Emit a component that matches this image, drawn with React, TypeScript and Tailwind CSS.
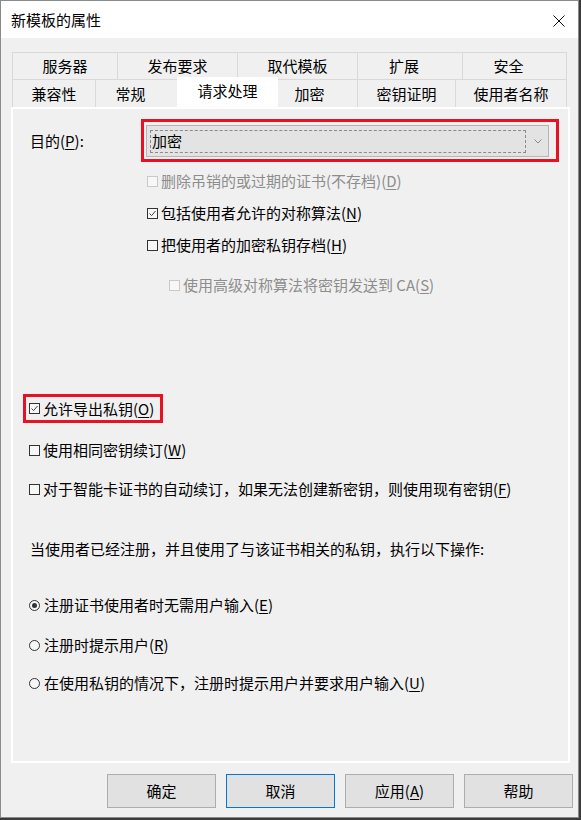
import React from "react";

const font = "font-['Noto_Sans_CJK_SC','Noto_Sans',sans-serif]";

function Key({ k }: { k: string }) {
  return <u className="underline-offset-2 decoration-1">{k}</u>;
}

function Check({ on, disabled }: { on?: boolean; disabled?: boolean }) {
  return (
    <span
      className={`flex h-[11px] w-[11px] shrink-0 items-center justify-center border bg-[#f7f7f7] ${
        disabled ? "border-[#c9c9c9]" : "border-[#333333]"
      }`}
    >
      {on && (
        <svg width="9" height="9" viewBox="0 0 9 9">
          <path d="M1.5 4.5 L3.6 6.6 L7.5 2" fill="none" stroke="#444" strokeWidth="1" />
        </svg>
      )}
    </span>
  );
}

function Radio({ on }: { on?: boolean }) {
  return (
    <span className="flex h-[11px] w-[11px] shrink-0 items-center justify-center rounded-full border border-[#333333] bg-[#f7f7f7]">
      {on && <span className="h-[5px] w-[5px] rounded-full bg-[#333333]" />}
    </span>
  );
}

function CheckRow({
  children,
  on,
  disabled,
  className = "",
}: {
  children: React.ReactNode;
  on?: boolean;
  disabled?: boolean;
  className?: string;
}) {
  return (
    <div className={`flex h-[20px] items-center gap-[3px] ${className}`}>
      <Check on={on} disabled={disabled} />
      <span className={disabled ? "text-[#8d8d8d]" : "text-black"}>{children}</span>
    </div>
  );
}

function RadioRow({ children, on, className = "" }: { children: React.ReactNode; on?: boolean; className?: string }) {
  return (
    <div className={`flex h-[20px] items-center gap-[4px] ${className}`}>
      <Radio on={on} />
      <span>{children}</span>
    </div>
  );
}

// top row of tabs, text is not always centred (windows quirk)
const row1 = [
  { t: "服务器", w: "w-[106px]" },
  { t: "发布要求", w: "w-[120px]" },
  { t: "取代模板", w: "w-[120px]" },
  { t: "扩展", w: "w-[105px] pr-[12px]" },
  { t: "安全", w: "w-[104px] pr-[12px]" },
];

function Button({ children, focused }: { children: React.ReactNode; focused?: boolean }) {
  return (
    <button
      className={`flex h-[34px] w-[109px] items-center justify-center border bg-[#e1e1e1] text-[15px] text-black ${
        focused ? "border-[#0078d7]" : "border-[#adadad]"
      }`}
    >
      {children}
    </button>
  );
}

export default function App() {
  return (
    <div className={`h-[820px] w-[581px] bg-[#3b3b3b] ${font} text-[15px] leading-[20px] text-black`}>
      <div className="flex h-[818px] w-[579px] flex-col border border-[#8a8a8a] bg-[#f0f0f0]">
        {/* title bar */}
        <div className="flex h-[37px] shrink-0 items-center justify-between bg-white pl-[10px] pr-[13px]">
          <span className="pt-[1px]">新模板的属性</span>
          <svg width="12" height="12" viewBox="0 0 12 12" className="mt-[2px]">
            <path d="M0.5 0.5 L11.5 11.5 M11.5 0.5 L0.5 11.5" stroke="#111" strokeWidth="1" />
          </svg>
        </div>

        {/* tabs */}
        <div className="mt-[14px] ml-[11px] flex flex-col">
          <div className="flex h-[27px]">
            {row1.map((r, i) => (
              <div
                key={r.t}
                className={`flex ${r.w} items-center justify-center border-t border-r border-[#d9d9d9] ${
                  i === 0 ? "border-l" : ""
                }`}
              >
                {r.t}
              </div>
            ))}
          </div>
          <div className="flex h-[28px] items-end">
            <div className="flex h-[28px] w-[84px] items-center justify-center border-t border-l border-r border-[#d9d9d9]">
              兼容性
            </div>
            <div className="flex h-[28px] w-[81px] items-center justify-center border-t border-[#d9d9d9] pr-[12px]">
              常规
            </div>
            <div className="relative z-10 mb-[-2px] flex h-[32px] w-[101px] items-start justify-center bg-white pt-[4px]">
              请求处理
            </div>
            <div className="flex h-[28px] w-[80px] items-center justify-center border-t border-r border-[#d9d9d9] pr-[16px]">
              加密
            </div>
            <div className="flex h-[28px] w-[98px] items-center justify-center border-t border-r border-[#d9d9d9]">
              密钥证明
            </div>
            <div className="flex h-[28px] w-[111px] items-center justify-center border-t border-r border-[#d9d9d9]">
              使用者名称
            </div>
          </div>
        </div>

        {/* panel */}
        <div className="ml-[10px] flex h-[656px] w-[559px] flex-col border-2 border-white">
          <div className="mt-[10px] flex items-center">
            <span className="ml-[17px] w-[111px]">
              目的(<Key k="P" />):
            </span>
            <div className="flex h-[43px] w-[418px] border-[3px] border-[#e81123]">
              <div className="ml-[2px] mt-[3px] flex h-[32px] w-[403px] items-center border border-[#b4b4b4] bg-[#e3e3e3]">
                <div className="ml-[3px] flex h-[23px] w-[376px] items-center border border-dashed border-[#8a8a8a] pl-[1px]">
                  加密
                </div>
                <svg width="8" height="5" viewBox="0 0 8 5" className="ml-[8px]">
                  <path d="M0.5 0.5 L4 4 L7.5 0.5" fill="none" stroke="#8a8a8a" strokeWidth="1" />
                </svg>
              </div>
            </div>
          </div>

          <CheckRow disabled className="ml-[134px] mt-[9px]">
            删除吊销的或过期的证书(不存档)(<Key k="D" />)
          </CheckRow>
          <CheckRow on className="ml-[134px] mt-[12px]">
            包括使用者允许的对称算法(<Key k="N" />)
          </CheckRow>
          <CheckRow className="ml-[134px] mt-[12px]">
            把使用者的加密私钥存档(<Key k="H" />)
          </CheckRow>
          <CheckRow disabled className="ml-[156px] mt-[20px]">
            使用高级对称算法将密钥发送到 CA(<Key k="S" />)
          </CheckRow>

          <div className="ml-[10px] mt-[99px] flex h-[29px] w-[140px] items-center border-[3px] border-[#e81123] pl-[3px]">
            <CheckRow on>
              允许导出私钥(<Key k="O" />)
            </CheckRow>
          </div>
          <CheckRow className="ml-[16px] mt-[17px]">
            使用相同密钥续订(<Key k="W" />)
          </CheckRow>
          <CheckRow className="ml-[16px] mt-[19px]">
            对于智能卡证书的自动续订，如果无法创建新密钥，则使用现有密钥(<Key k="F" />)
          </CheckRow>

          <div className="ml-[17px] mt-[40px] h-[20px]">
            当使用者已经注册，并且使用了与该证书相关的私钥，执行以下操作:
          </div>

          <RadioRow on className="ml-[16px] mt-[36px]">
            注册证书使用者时无需用户输入(<Key k="E" />)
          </RadioRow>
          <RadioRow className="ml-[16px] mt-[20px]">
            注册时提示用户(<Key k="R" />)
          </RadioRow>
          <RadioRow className="ml-[16px] mt-[18px]">
            在使用私钥的情况下，注册时提示用户并要求用户输入(<Key k="U" />)
          </RadioRow>
        </div>

        {/* buttons */}
        <div className="mt-[11px] flex justify-end gap-[10px] pr-[5px]">
          <Button>确定</Button>
          <Button focused>取消</Button>
          <Button>
            应用(<Key k="A" />)
          </Button>
          <Button>帮助</Button>
        </div>
      </div>
    </div>
  );
}
